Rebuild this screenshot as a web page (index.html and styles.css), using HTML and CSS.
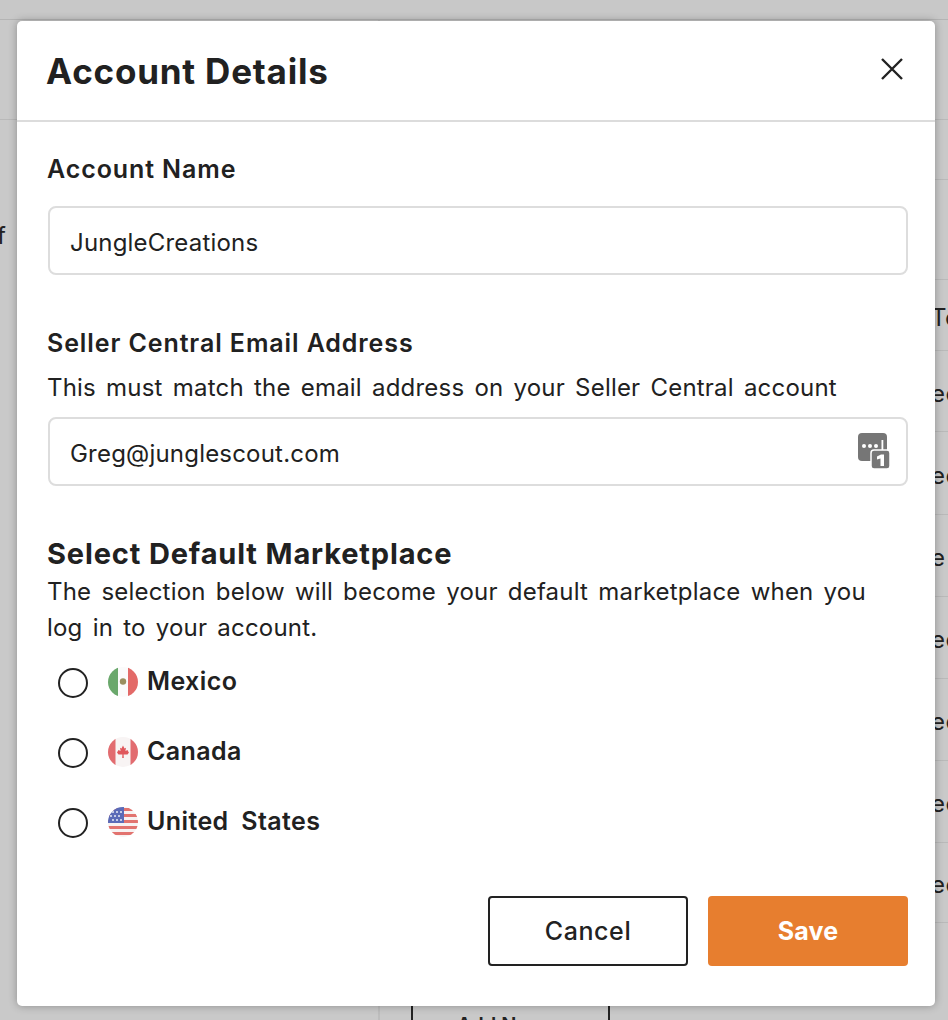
FILE: index.html
```html
<!DOCTYPE html>
<html lang="en">
<head>
<meta charset="utf-8">
<title>Account Details</title>
<link rel="stylesheet" href="styles.css">
</head>
<body>
<div class="page">
  <div class="topbar"></div>
  <div class="layout">
    <aside class="sidebar">
      <div class="side-head"></div>
      <span class="side-text">f</span>
    </aside>
    <main class="table">
      <div class="row r100"></div>
      <div class="row r60"></div>
      <div class="row r100"></div>
      <div class="row r71"><span class="cell">To</span></div>
      <div class="row r81"><span class="cell">ec</span></div>
      <div class="row r83"><span class="cell">ec</span></div>
      <div class="row r82"><span class="cell">e</span></div>
      <div class="row r82"><span class="cell">ec</span></div>
      <div class="row r82"><span class="cell">ec</span></div>
      <div class="row r82"><span class="cell">ec</span></div>
      <div class="row r80"><span class="cell">ec</span></div>
      <div class="row last"><span class="under-btn">Add New</span></div>
    </main>
  </div>

  <div class="modal">
    <header class="modal-head">
      <h1 class="title">Account Details</h1>
      <svg class="close" viewBox="0 0 24 24" width="24" height="24" aria-label="Close"><path d="M2 2 22 22M22 2 2 22" fill="none" stroke="#222" stroke-width="2.4"/></svg>
    </header>
    <div class="modal-body">
      <label class="label">Account Name</label>
      <div class="input input-first">JungleCreations</div>

      <label class="label label-email">Seller Central Email Address</label>
      <p class="hint">This must match the email address on your Seller Central account</p>
      <div class="input">Greg@junglescout.com
        <svg class="pass" viewBox="0 0 32 36" width="32" height="36">
          <rect x="0" y="0" width="29" height="28" rx="4" fill="#767676"/>
          <circle cx="6" cy="13" r="2" fill="#fff"/><circle cx="12" cy="13" r="2" fill="#fff"/><circle cx="18" cy="13" r="2" fill="#fff"/>
          <rect x="23.5" y="7" width="1.8" height="11" fill="#fff"/>
          <rect x="13" y="17" width="19" height="19" rx="3" fill="#767676" stroke="#fff" stroke-width="1.5"/>
          <path d="M19 23.5 23 21.5H26V33H22.5V25.5L19 26.5Z" fill="#fff"/>
        </svg>
      </div>

      <h2 class="section">Select Default Marketplace</h2>
      <p class="para">The selection below will become your default marketplace when you log in to your account.</p>

      <div class="radios">
        <div class="radio-row">
          <span class="radio"></span>
          <svg class="flag" viewBox="0 0 30 30" width="30" height="30">
            <defs><clipPath id="c1"><circle cx="15" cy="15" r="15"/></clipPath></defs>
            <g clip-path="url(#c1)">
              <rect width="30" height="30" fill="#fbfbfb"/>
              <rect width="10" height="30" fill="#6aa86c"/>
              <rect x="20" width="10" height="30" fill="#e36a68"/>
              <circle cx="15" cy="14.5" r="3.2" fill="#9a8f5f"/>
            </g>
          </svg>
          <span class="country">Mexico</span>
        </div>
        <div class="radio-row">
          <span class="radio"></span>
          <svg class="flag" viewBox="0 0 30 30" width="30" height="30">
            <defs><clipPath id="c2"><circle cx="15" cy="15" r="15"/></clipPath></defs>
            <g clip-path="url(#c2)">
              <rect width="30" height="30" fill="#f8f4f4"/>
              <rect width="7.5" height="30" fill="#e26c70"/>
              <rect x="22.5" width="7.5" height="30" fill="#e26c70"/>
              <path d="M15 8.5 16.5 11.5 18 10.8 17.4 14 19.5 13 20.5 15 21 15.5 19.5 17.5 15.6 17.5 15.8 21H14.2L14.4 17.5 10.5 17.5 9 15.5 10.5 13 12.6 14 12 10.8 13.5 11.5Z" fill="#e0575c"/>
            </g>
          </svg>
          <span class="country">Canada</span>
        </div>
        <div class="radio-row">
          <span class="radio"></span>
          <svg class="flag" viewBox="0 0 30 30" width="30" height="30">
            <defs><clipPath id="c3"><circle cx="15" cy="15" r="15"/></clipPath></defs>
            <g clip-path="url(#c3)">
              <rect width="30" height="30" fill="#f7f2f2"/>
              <rect y="1" width="30" height="3" fill="#e2736f"/>
              <rect y="7" width="30" height="3" fill="#e2736f"/>
              <rect y="13" width="30" height="3" fill="#e2736f"/>
              <rect y="19" width="30" height="3" fill="#e2736f"/>
              <rect y="25" width="30" height="3" fill="#e2736f"/>
              <rect width="16" height="16" fill="#5a6bb8"/>
              <g fill="#e8ebf6"><circle cx="5" cy="5" r="1"/><circle cx="9" cy="5" r="1"/><circle cx="13" cy="5" r="1"/><circle cx="3" cy="9" r="1"/><circle cx="7" cy="9" r="1"/><circle cx="11" cy="9" r="1"/><circle cx="5" cy="13" r="1"/><circle cx="9" cy="13" r="1"/><circle cx="13" cy="13" r="1"/></g>
            </g>
          </svg>
          <span class="country">United States</span>
        </div>
      </div>

      <div class="actions">
        <button class="btn btn-cancel">Cancel</button>
        <button class="btn btn-save">Save</button>
      </div>
    </div>
  </div>
</div>
</body>
</html>
```
FILE: styles.css
```css
* { box-sizing: border-box; }
html, body { margin: 0; padding: 0; }
body {
  font-family: Inter, "Liberation Sans", sans-serif;
  color: #212121;
  background: #c9c9c9;
}
.page {
  position: relative;
  width: 948px;
  height: 1020px;
  overflow: hidden;
  background: #c9c9c9;
}
.topbar { height: 20px; background: #c8c8c8; border-bottom: 1px solid #b4b4b4; }
.layout { display: flex; height: 1000px; }
.sidebar { width: 380px; flex: none; border-right: 2px solid #bdbdbd; position: relative; }
.side-head { height: 100px; border-bottom: 1px solid #b9b9b9; }
.side-text { display: block; margin: 101px 0 0 -3px; font-size: 24px; line-height: 30px; color: #222; }
.table { flex: 1; min-width: 0; }
.row {
  border-bottom: 1px solid #b9b9b9;
  font-size: 24px;
  color: #222;
  display: flex;
  align-items: center;
  white-space: nowrap;
}
.r60 { height: 60px; }
.r100 { height: 100px; }
.r71 { height: 71px; }
.r81 { height: 81px; }
.r83 { height: 83px; }
.r82 { height: 82px; }
.r80 { height: 80px; }
.cell { margin: 4px 0 0 551px; letter-spacing: .5px; }
.row.last { height: 98px; border-bottom: 0; align-items: flex-start; }
.under-btn {
  margin: 74px 0 0 31px;
  width: 199px;
  height: 50px;
  border: 2px solid #222;
  padding: 14px 0 0 44px;
  font-size: 20px;
  font-weight: 600;
}
.modal {
  position: absolute;
  left: 17px;
  top: 21px;
  width: 918px;
  height: 985px;
  background: #fff;
  border-radius: 5px;
  box-shadow: 0 0 9px rgba(0,0,0,.3);
}
.modal-head {
  height: 101px;
  padding: 0 30px;
  border-bottom: 2px solid #dcdcdc;
  display: flex;
  align-items: center;
  justify-content: space-between;
}
.title { margin: 1px 0 0 -1px; font-size: 35px; font-weight: 700; letter-spacing: .8px; }
.close { margin-right: 1px; margin-top: -4px; }
.modal-body { padding: 29px 27px 0 30px; }
.label { display: block; font-size: 25px; font-weight: 600; line-height: 36px; letter-spacing: .9px; }
.input {
  position: relative;
  margin-top: 20px;
  margin-left: 1px;
  height: 69px;
  padding: 3px 20px 0;
  display: flex;
  align-items: center;
  border: 2px solid #dddddd;
  border-radius: 8px;
  font-size: 24px;
  letter-spacing: .2px;
}
.input-first { margin-top: 19px; }
.label-email { margin-top: 50px; }
.hint { margin: 9px 0 0; font-size: 24px; line-height: 36px; letter-spacing: .2px; word-spacing: 3.2px; }
.hint + .input { margin-top: 11px; }
.pass { position: absolute; right: 16px; top: 14px; }
.section { margin: 50px 0 0; font-size: 29px; font-weight: 700; line-height: 36px; letter-spacing: .85px; }
.para { margin: 2px 0 0; font-size: 24px; line-height: 36px; width: 825px; letter-spacing: .2px; word-spacing: 3.2px; }
.radios { margin-top: 22px; margin-left: 11px; display: flex; flex-direction: column; gap: 40px; }
.radio-row { display: flex; align-items: center; height: 30px; }
.radio { width: 30px; height: 30px; border: 2px solid #222; border-radius: 50%; margin-right: 20px; }
.flag { margin-top: -3px; margin-right: 9px; }
.country { font-size: 25px; font-weight: 600; margin-top: -4px; letter-spacing: .4px; word-spacing: 6px; }
.actions { margin-top: 58px; display: flex; justify-content: flex-end; gap: 20px; }
.btn {
  width: 200px;
  height: 70px;
  border-radius: 4px;
  font-family: inherit;
  font-size: 25px;
  font-weight: 600;
  letter-spacing: .6px;
}
.btn-cancel { background: #fff; border: 2px solid #222; color: #222; font-weight: 500; }
.btn-save { background: #e77e2f; border: 0; color: #fff; font-weight: 700; letter-spacing: .2px; }
```
